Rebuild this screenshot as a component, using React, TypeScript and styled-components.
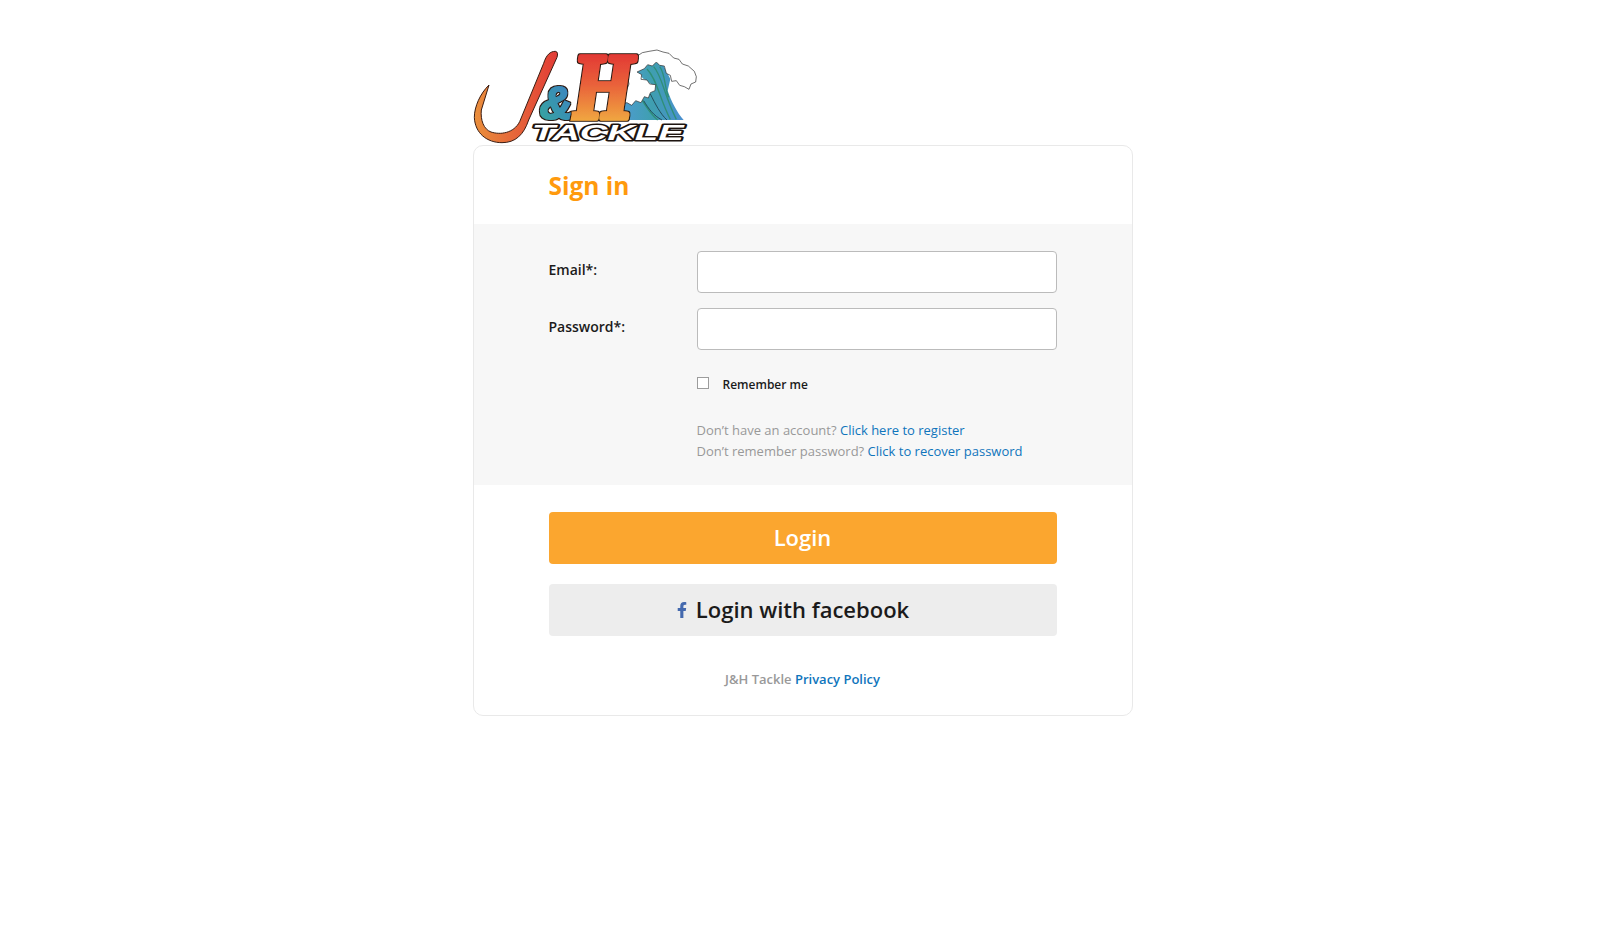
import React from 'react';
import styled, { createGlobalStyle } from 'styled-components';
import { FaFacebookF } from 'react-icons/fa';

const GlobalStyle = createGlobalStyle`
  html, body {
    margin: 0;
    padding: 0;
    background: #fff;
    font-family: "Open Sans", "Liberation Sans", sans-serif;
    color: #1b1b1b;
  }
  * { box-sizing: border-box; }
`;

const Page = styled.div`
  width: 660px;
  margin: 48px auto 0;
`;

const LogoLink = styled.a`
  display: block;
  width: 225px;
  height: 97px;
  svg { display: block; overflow: visible; }
`;

const Card = styled.div`
  border: 1px solid #e9e9e9;
  border-radius: 10px;
  overflow: hidden;
  background: #fff;
`;

const CardHeader = styled.div`
  height: 78px;
  padding: 0 75px;
  display: flex;
  align-items: center;
`;

const Title = styled.h1`
  margin: 0;
  font-size: 24.5px;
  font-weight: 700;
  color: #ff9a0d;
`;

const FormBand = styled.div`
  background: #f7f7f7;
  padding: 27px 75px 23px;
`;

const Row = styled.div`
  display: grid;
  grid-template-columns: 148px 360px;
  align-items: start;
  margin-bottom: 15px;
`;

const Label = styled.label`
  font-size: 14px;
  line-height: 19px;
  font-weight: 600;
  padding-top: 9px;
`;

const Input = styled.input`
  display: block;
  width: 360px;
  height: 42px;
  border: 1px solid #bbb;
  border-radius: 4px;
  background: #fff;
`;

const RememberRow = styled.label`
  display: flex;
  align-items: center;
  margin: 24px 0 0 148px;
  height: 20px;
  font-size: 12px;
  font-weight: 600;
`;

const Checkbox = styled.span`
  width: 12px;
  height: 12px;
  margin-right: 14px;
  margin-top: -2px;
  border: 1px solid #9c9c9c;
  background: #fff;
`;

const HelpText = styled.div`
  margin: 26px 0 0 148px;
  font-size: 13px;
  line-height: 21px;
  color: #999;
`;

const Link = styled.a`
  color: #0f75bc;
  text-decoration: none;
`;

const Actions = styled.div`
  padding: 27px 75px 0;
  display: flex;
  flex-direction: column;
  gap: 20px;
`;

const Button = styled.button<{ $primary?: boolean }>`
  height: 52px;
  width: 100%;
  border: 0;
  border-radius: 4px;
  display: flex;
  align-items: center;
  justify-content: center;
  gap: 9px;
  font-family: inherit;
  font-size: 22px;
  line-height: 48px;
  padding: 0 ${(p) => (p.$primary ? '0' : '19px')} 3px 0;
  font-weight: 600;
  background: ${(p) => (p.$primary ? '#fba62f' : '#ededed')};
  color: ${(p) => (p.$primary ? '#fff' : '#1b1b1b')};
`;

const FacebookIcon = styled(FaFacebookF)`
  color: #4469ae;
  width: 10px;
  height: 16px;
  margin-top: 3px;
`;

const Footer = styled.div`
  padding: 33px 0 26px;
  text-align: center;
  font-size: 13px;
  line-height: 20px;
  font-weight: 600;
  color: #999;
`;

// viewBox is in the same units as a 3x crop of the logo
const Logo = () => (
  <svg width="225" height="97" viewBox="38 24 675 291">
    <defs>
      <linearGradient id="hookLeft" x1="0" y1="0" x2="1" y2="0">
        <stop offset="0" stopColor="#ea8f3c" />
        <stop offset="0.45" stopColor="#e6693a" />
        <stop offset="1" stopColor="#e23b36" />
      </linearGradient>
      <linearGradient id="letterH" gradientUnits="userSpaceOnUse" x1="0" y1="45" x2="0" y2="240">
        <stop offset="0" stopColor="#e23a35" />
        <stop offset="0.45" stopColor="#e9613a" />
        <stop offset="1" stopColor="#f0a540" />
      </linearGradient>
      <linearGradient id="amp" x1="1" y1="0" x2="0" y2="1">
        <stop offset="0" stopColor="#3d7fc6" />
        <stop offset="1" stopColor="#35a89c" />
      </linearGradient>
      <linearGradient id="sea" x1="0" y1="0" x2="1" y2="0">
        <stop offset="0" stopColor="#4f9bd2" />
        <stop offset="0.5" stopColor="#3f9fb0" />
        <stop offset="1" stopColor="#4a8fd0" />
      </linearGradient>
      <filter id="outline" x="-10%" y="-10%" width="120%" height="120%">
        <feMorphology in="SourceAlpha" operator="dilate" radius="2.5" result="grown" />
        <feFlood floodColor="#2b1a12" />
        <feComposite in2="grown" operator="in" />
        <feMerge>
          <feMergeNode />
          <feMergeNode in="SourceGraphic" />
        </feMerge>
      </filter>
    </defs>

    <path
      d="M285 34 C270 34 258 44 250 70 L178 245 C160 280 120 285 92 276 C70 268 60 240 63 210 L86 135 C60 160 42 200 42 232 C44 280 80 308 125 308 C165 308 190 285 205 240 L290 52 C293 42 292 35 285 34 Z"
      fill="url(#hookLeft)"
      stroke="#3a1c12"
      strokeWidth="3"
    />

    <g transform="translate(480 12)">
      <path
        d="M0 228 L190 228 C170 205 152 170 142 140 L150 105 L130 65 L110 55 L75 65 L50 85 L70 105 L100 125 L60 150 L0 180 Z"
        fill="url(#sea)"
      />
      <path
        d="M80 75 C110 105 118 165 150 226 M100 68 C125 95 130 150 168 226 M118 68 C135 90 132 130 145 160 M60 160 C75 185 90 210 112 228"
        fill="none"
        stroke="#2f8f78"
        strokeWidth="4"
      />
      <path
        d="M70 170 C85 195 100 215 125 228 M90 150 C105 180 120 210 140 228"
        fill="none"
        stroke="#1d3f4a"
        strokeWidth="2.5"
      />
      <path
        d="M8 178 L14 150 L26 120 L20 92 L22 62 L34 50 L38 36 L54 34 L66 26 L86 22 L110 18 L128 24 L146 28 L160 42 L176 46 L186 60 L204 66 L222 82 L228 98 L226 114 L212 120 L206 136 L192 128 L178 124 L168 110 L154 112 L150 94 L138 88 L132 66 L118 64 L108 54 L96 66 L82 62 L72 74 L50 84 L64 92 L62 106 L80 108 L88 120 L106 122 L104 140 L90 146 L84 162 L72 158 L62 176 L46 170 L34 184 L20 176 Z"
        fill="#fff"
        stroke="#2a2a2a"
        strokeWidth="2"
        strokeLinejoin="round"
      />
    </g>

    <text
      x="336"
      y="234"
      textLength="184"
      lengthAdjust="spacingAndGlyphs"
      fontFamily="'Liberation Serif', serif"
      fontWeight="700"
      fontStyle="italic"
      fontSize="280"
      fill="url(#letterH)"
      stroke="url(#letterH)"
      strokeWidth="17"
      strokeLinejoin="round"
      filter="url(#outline)"
    >
      H
    </text>
    <text
      x="238"
      y="236"
      textLength="98"
      lengthAdjust="spacingAndGlyphs"
      fontFamily="'Liberation Sans', sans-serif"
      fontWeight="700"
      fontStyle="italic"
      fontSize="140"
      fill="url(#amp)"
      stroke="url(#amp)"
      strokeWidth="6"
      filter="url(#outline)"
    >
      &amp;
    </text>
    <text
      x="214"
      y="300"
      textLength="456"
      lengthAdjust="spacingAndGlyphs"
      fontFamily="'Liberation Sans', sans-serif"
      fontWeight="700"
      fontStyle="italic"
      fontSize="68"
      fill="#fff"
      stroke="#1d1410"
      strokeWidth="9"
      strokeLinejoin="round"
      paintOrder="stroke"
    >
      TACKLE
    </text>
  </svg>
);

export default function App() {
  return (
    <>
      <GlobalStyle />
      <Page>
        <LogoLink href="#">
          <Logo />
        </LogoLink>
        <Card>
          <CardHeader>
            <Title>Sign in</Title>
          </CardHeader>
          <FormBand>
            <Row>
              <Label>Email*:</Label>
              <Input type="text" />
            </Row>
            <Row>
              <Label>Password*:</Label>
              <Input type="password" />
            </Row>
            <RememberRow>
              <Checkbox />
              Remember me
            </RememberRow>
            <HelpText>
              <div>
                Don’t have an account? <Link href="#">Click here to register</Link>
              </div>
              <div>
                Don’t remember password? <Link href="#">Click to recover password</Link>
              </div>
            </HelpText>
          </FormBand>
          <Actions>
            <Button $primary>Login</Button>
            <Button>
              <FacebookIcon />
              Login with facebook
            </Button>
          </Actions>
          <Footer>
            J&amp;H Tackle <Link href="#">Privacy Policy</Link>
          </Footer>
        </Card>
      </Page>
    </>
  );
}
